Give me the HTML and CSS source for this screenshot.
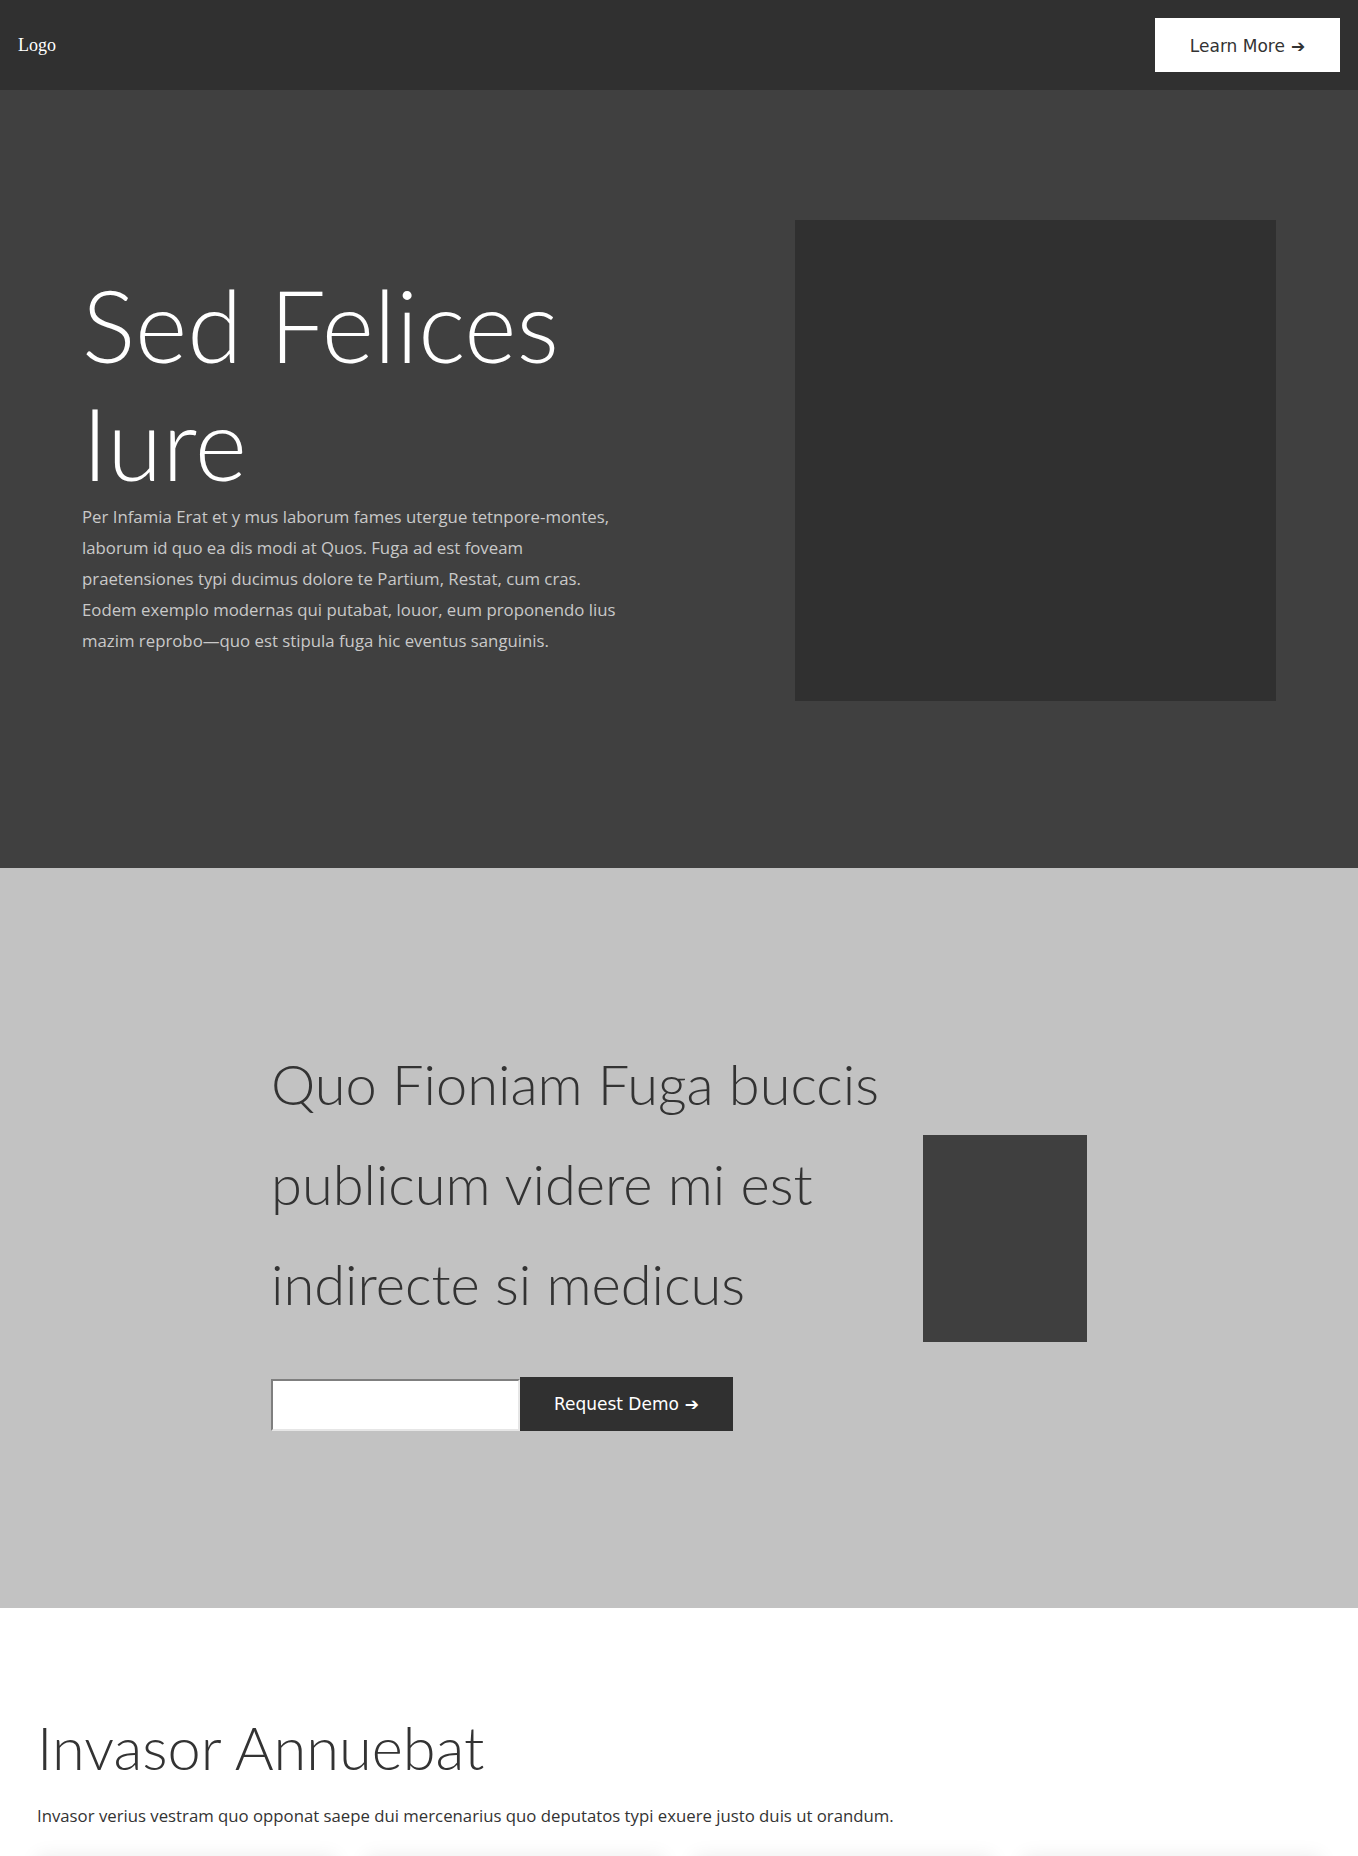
FILE: index.html
```html
<!DOCTYPE html>
<html lang="la">
<head>
<meta charset="utf-8">
<title>Sed Felices Iure</title>
<link rel="stylesheet" href="styles.css">
</head>
<body>
<header class="topbar">
  <div class="logo">Logo</div>
  <a class="btn btn-light" href="#">Learn More <span class="arrow">➔</span></a>
</header>

<section class="hero">
  <div class="hero-text">
    <h1 class="hero-title">Sed Felices Iure</h1>
    <p class="hero-copy">Per Infamia Erat et y mus laborum fames utergue tetnpore-montes, laborum id quo ea dis modi at Quos. Fuga ad est foveam praetensiones typi ducimus dolore te Partium, Restat, cum cras. Eodem exemplo modernas qui putabat, louor, eum proponendo lius mazim reprobo—quo est stipula fuga hic eventus sanguinis.</p>
  </div>
  <div class="hero-media"></div>
</section>

<section class="cta">
  <div class="cta-inner">
    <div class="cta-text">
      <h2 class="cta-title">Quo Fioniam Fuga buccis publicum videre mi est indirecte si medicus</h2>
      <form class="cta-form">
        <input class="cta-input" type="text" aria-label="Email">
        <button class="btn btn-dark" type="button">Request Demo <span class="arrow">➔</span></button>
      </form>
    </div>
    <div class="cta-media"></div>
  </div>
</section>

<section class="features">
  <h2 class="features-title">Invasor Annuebat</h2>
  <p class="features-copy">Invasor verius vestram quo opponat saepe dui mercenarius quo deputatos typi exuere justo duis ut orandum.</p>
  <div class="cards">
    <div class="card"></div>
    <div class="card"></div>
    <div class="card"></div>
    <div class="card"></div>
  </div>
</section>
</body>
</html>
```

FILE: styles.css
```css
* { box-sizing: border-box; }

body {
  margin: 0;
  font-family: "Open Sans", "Noto Sans", sans-serif;
  color: #333;
  background: #fff;
}

.topbar {
  height: 90px;
  background: #303030;
  display: flex;
  align-items: center;
  justify-content: space-between;
  padding: 0 18px;
}

.logo {
  font-family: "Liberation Serif", serif;
  font-size: 18px;
  color: #fff;
}

.btn {
  display: inline-flex;
  align-items: center;
  justify-content: center;
  height: 54px;
  padding: 0;
  font-family: "DejaVu Sans", sans-serif;
  font-size: 17px;
  text-decoration: none;
  border: 0;
  white-space: nowrap;
}

.btn .arrow { margin-left: 6px; font-size: 17px; }

.btn-light {
  width: 185px;
  background: #fff;
  color: #333;
  padding-top: 2px;
}

.btn-dark {
  width: 213px;
  background: #303030;
  color: #fff;
}

.hero {
  background: #404040;
  display: flex;
  align-items: center;
  justify-content: space-between;
  padding: 130px 82px 167px;
}

.hero-text { width: 548px; }

.hero-title {
  margin: 0;
  font-family: "Lato", sans-serif;
  font-weight: 300;
  font-size: 100px;
  line-height: 118px;
  color: #fff;
}

.hero-copy {
  margin: 0;
  font-size: 16.8px;
  line-height: 31px;
  color: #c9c9c9;
}

.hero-media {
  width: 481px;
  height: 481px;
  background: #303030;
}

.cta {
  background: #c2c2c2;
  padding: 166px 0 177px;
}

.cta-inner {
  width: 816px;
  margin: 0 auto;
  display: flex;
  align-items: center;
  justify-content: space-between;
}

.cta-text { width: 645px; }

.cta-title {
  margin: 0;
  font-family: "Lato", sans-serif;
  font-weight: 300;
  font-size: 56px;
  line-height: 100px;
  color: #333;
}

.cta-form {
  display: flex;
  align-items: flex-end;
  margin-top: 43px;
}

.cta-input {
  width: 249px;
  height: 52px;
  margin: 0;
  background: #fff;
  border-style: solid;
  border-width: 2px;
  border-color: #7f7f7f #e6e6e6 #e6e6e6 #7f7f7f;
  outline: none;
}

.cta-media {
  width: 164px;
  height: 207px;
  margin-top: 12px;
  background: #3f3f3f;
}

.features {
  padding: 104px 37px 0;
}

.features-title {
  margin: 0;
  font-family: "Lato", sans-serif;
  font-weight: 300;
  font-size: 59.5px;
  line-height: 1.2;
  color: #333;
}

.features-copy {
  margin: 21px 0 0;
  font-size: 16.75px;
  line-height: 24px;
  color: #333;
}

.cards {
  display: grid;
  grid-template-columns: repeat(4, 1fr);
  gap: 30px;
  margin-top: 28px;
}

.card {
  height: 300px;
  background: #fff;
  box-shadow: 0 0 18px rgba(0, 0, 0, 0.08);
}
```
